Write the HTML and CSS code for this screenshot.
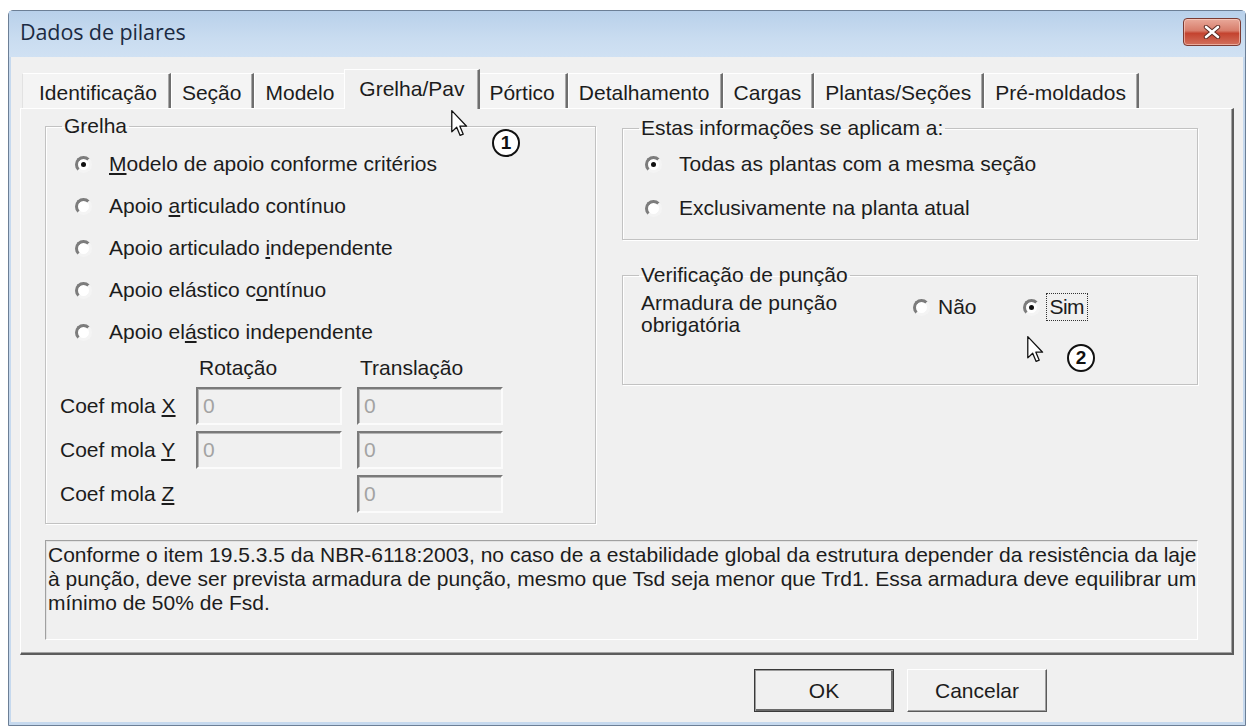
FILE: index.html
```html
<!DOCTYPE html>
<html lang="pt">
<head>
<meta charset="utf-8">
<title>Dados de pilares</title>
<link rel="stylesheet" href="styles.css">
</head>
<body>
<div class="window">
  <div class="titlebar">
    <span class="title">Dados de pilares</span>
    <span class="close">
      <svg viewBox="0 0 20 14" width="20" height="14">
        <path d="M4 2 L16 12 M16 2 L4 12" stroke="#5a2a22" stroke-width="4.4" stroke-linecap="round"/>
        <path d="M4 2 L16 12 M16 2 L4 12" stroke="#fff" stroke-width="2.6" stroke-linecap="round"/>
      </svg>
    </span>
  </div>

  <div class="client">
    <div class="tabs">
      <div class="tab first">Identificação</div>
      <div class="tab">Seção</div>
      <div class="tab">Modelo</div>
      <div class="tab active">Grelha/Pav</div>
      <div class="tab">Pórtico</div>
      <div class="tab">Detalhamento</div>
      <div class="tab">Cargas</div>
      <div class="tab">Plantas/Seções</div>
      <div class="tab">Pré-moldados</div>
    </div>

    <div class="panel">
      <div class="top-row">
        <fieldset class="group grelha">
          <legend>Grelha</legend>
          <div class="radio-list">
            <label class="radio"><span class="rb on"></span><span><u>M</u>odelo de apoio conforme critérios</span></label>
            <label class="radio"><span class="rb"></span><span>Apoio <u>a</u>rticulado contínuo</span></label>
            <label class="radio"><span class="rb"></span><span>Apoio articulado <u>i</u>ndependente</span></label>
            <label class="radio"><span class="rb"></span><span>Apoio elástico c<u>o</u>ntínuo</span></label>
            <label class="radio"><span class="rb"></span><span>Apoio el<u>á</u>stico independente</span></label>
          </div>
          <div class="coef">
            <span></span>
            <span class="colhead">Rotação</span>
            <span class="colhead">Translação</span>

            <span class="coef-label">Coef mola <u>X</u></span>
            <span class="tb">0</span>
            <span class="tb">0</span>

            <span class="coef-label">Coef mola <u>Y</u></span>
            <span class="tb">0</span>
            <span class="tb">0</span>

            <span class="coef-label">Coef mola <u>Z</u></span>
            <span></span>
            <span class="tb">0</span>
          </div>
        </fieldset>

        <div class="right-col">
          <fieldset class="group aplica">
            <legend>Estas informações se aplicam a:</legend>
            <div class="radio-list">
              <label class="radio"><span class="rb on"></span><span>Todas as plantas com a mesma seção</span></label>
              <label class="radio"><span class="rb"></span><span>Exclusivamente na planta atual</span></label>
            </div>
          </fieldset>

          <fieldset class="group puncao">
            <legend>Verificação de punção</legend>
            <div class="puncao-row">
              <span class="puncao-label">Armadura de punção<br>obrigatória</span>
              <div class="yesno">
                <label class="radio"><span class="rb"></span><span>Não</span></label>
                <label class="radio"><span class="rb on"></span><span class="focus">Sim</span></label>
              </div>
            </div>
          </fieldset>
        </div>
      </div>

      <div class="desc">Conforme o item 19.5.3.5 da NBR-6118:2003, no caso de a estabilidade global da estrutura depender da resistência da laje<br>à punção, deve ser prevista armadura de punção, mesmo que Tsd seja menor que Trd1. Essa armadura deve equilibrar um<br>mínimo de 50% de Fsd.</div>
    </div>

    <div class="buttons">
      <span class="btn default">OK</span>
      <span class="btn">Cancelar</span>
    </div>
  </div>

  <!-- pointer and step markers drawn over the dialog -->
  <svg class="cursor c1" viewBox="0 0 13 21" width="17" height="27">
    <path d="M0.5 0.5 L0.5 17 L4.3 13.4 L7 19.8 L9.4 18.8 L6.8 12.6 L12 12.6 Z" fill="#fff" stroke="#111" stroke-width="1" stroke-linejoin="round"/>
  </svg>
  <span class="step s1">1</span>

  <svg class="cursor c2" viewBox="0 0 13 21" width="17" height="27">
    <path d="M0.5 0.5 L0.5 17 L4.3 13.4 L7 19.8 L9.4 18.8 L6.8 12.6 L12 12.6 Z" fill="#fff" stroke="#111" stroke-width="1" stroke-linejoin="round"/>
  </svg>
  <span class="step s2">2</span>
</div>
</body>
</html>
```

FILE: styles.css
```css
* { box-sizing: border-box; }

html, body {
  margin: 0;
  padding: 0;
  background: #ffffff;
}

body {
  font-family: "Liberation Sans", Arial, sans-serif;
  font-size: 21px;
  color: #1c1c1c;
}

/* ---- window frame ---- */
.window {
  position: relative;
  margin: 10px 0 0 8px;
  width: 1238px;
  height: 716px;
  border: 1px solid #6c7f96;
  border-radius: 5px 5px 0 0;
  background: #c6d9ee;
  display: flex;
  flex-direction: column;
  padding: 0 2px 3px 2px;
}

.titlebar {
  height: 46px;
  display: flex;
  align-items: flex-start;
  justify-content: space-between;
  padding: 0 4px 0 11px;
  background: linear-gradient(#b8d0ea, #c9dcf0 60%, #d0e1f3);
  margin: 0 -2px;
}

.title {
  font-family: "Open Sans", "Noto Sans", sans-serif;
  font-size: 21.5px;
  color: #1b2a42;
  margin-top: 6px;
  letter-spacing: -0.1px;
}

.close {
  margin-top: 7px;
  width: 58px;
  height: 28px;
  border: 1px solid #7b3b33;
  border-radius: 4px;
  background: linear-gradient(#e9a99a, #d77d6b 45%, #c4432f 55%, #d2705c);
  box-shadow: inset 0 0 0 1px rgba(255, 220, 210, 0.55);
  display: flex;
  align-items: center;
  justify-content: center;
}

/* ---- client area ---- */
.client {
  flex: 1;
  background: #f0f0f0;
  padding: 12px 9px 0 9px;
  display: flex;
  flex-direction: column;
}

/* ---- tab strip ---- */
.tabs {
  display: flex;
  align-items: flex-end;
  height: 39px;
  padding-left: 2px;
  position: relative;
  z-index: 1;
}

.tab {
  height: 35px;
  line-height: 38px;
  padding: 0 11px 0 10px;
  background: #f4f4f4;
  border-top: 1px solid #ffffff;
  border-left: 1px solid #ffffff;
  border-right: 2px solid #6e6e6e;
  box-shadow: inset -1px 0 #a9a9a9;
  white-space: nowrap;
}

.tab.first {
  border-left: 1px solid #e2e2e2;
  padding-left: 16px;
  padding-right: 12px;
}

.tab.active {
  height: 40px;
  line-height: 37px;
  background: #f0f0f0;
  margin: 0 -2px -1px -3px;
  padding: 0 14px 0 14px;
  position: relative;
  z-index: 2;
}

/* ---- tab page ---- */
.panel {
  height: 547px;
  border-top: 1px solid #ffffff;
  border-left: 1px solid #ffffff;
  border-right: 2px solid #5c5c5c;
  border-bottom: 2px solid #5c5c5c;
  box-shadow: inset -1px -1px #a3a3a3;
  padding: 6px 0 0 24px;
  display: flex;
  flex-direction: column;
}

.top-row {
  display: grid;
  grid-template-columns: 551px 576px;
  column-gap: 26px;
}

/* etched group boxes */
.group {
  margin: 0;
  padding: 0;
  border: 1px solid #c2c2c2;
  box-shadow: inset 1px 1px #ffffff, 1px 1px #ffffff;
  min-width: 0;
}

.group legend {
  padding: 0 2px;
  margin-left: 16px;
  line-height: 22px;
  color: #1c1c1c;
}

.grelha {
  height: 409px;
}

.radio-list {
  display: flex;
  flex-direction: column;
}

.radio {
  display: flex;
  align-items: center;
  gap: 17px;
  height: 42px;
}

/* sunken round option marks */
.rb {
  width: 17px;
  height: 17px;
  flex: none;
  border-radius: 50%;
  background: #ffffff;
  border: 3px solid;
  border-color: #7c7c7c #f4f4f4 #f4f4f4 #7c7c7c;
  position: relative;
}

.rb.on::after {
  content: "";
  position: absolute;
  left: 3px;
  top: 3px;
  width: 5px;
  height: 5px;
  border-radius: 50%;
  background: #111111;
}

.grelha .radio-list {
  padding: 6px 0 0 29px;
}

/* spring coefficient grid */
.coef {
  display: grid;
  grid-template-columns: 121px 146px 146px;
  column-gap: 15px;
  row-gap: 6px;
  padding: 0 0 0 14px;
  margin-top: 4px;
  align-items: center;
}

.colhead {
  line-height: 22px;
  padding-left: 3px;
  margin-bottom: 2px;
}

.coef-label {
  line-height: 22px;
}

.tb {
  height: 38px;
  line-height: 34px;
  padding-left: 5px;
  background: #f0f0f0;
  color: #a3a3a3;
  border: 2px solid;
  border-color: #7a7a7a #fbfbfb #fbfbfb #7a7a7a;
  box-shadow: inset 1px 1px #b4b4b4;
}

/* right column */
.right-col {
  display: flex;
  flex-direction: column;
  gap: 24px;
  padding-top: 2px;
}

.aplica {
  height: 123px;
}

.aplica .radio-list {
  padding: 4px 0 0 22px;
  gap: 2px;
}

.puncao {
  height: 121px;
}

.puncao-row {
  display: flex;
  align-items: flex-start;
  padding: 6px 0 0 18px;
}

.puncao-label {
  width: 272px;
  line-height: 22px;
}

.yesno {
  display: flex;
  gap: 46px;
  margin-top: -6px;
}

.yesno .radio {
  gap: 8px;
}

.focus {
  outline: 1px dotted #333;
  outline-offset: 1px;
  padding: 0 2px;
  letter-spacing: -0.6px;
}

/* description */
.desc {
  margin: 16px 0 0 0;
  width: 1153px;
  height: 100px;
  padding: 2px 0 0 2px;
  line-height: 24px;
  border: 1px solid;
  border-color: #a0a0a0 #ffffff #ffffff #a0a0a0;
  box-shadow: inset 1px 1px #e2e2e2;
  background: #f0f0f0;
  white-space: nowrap;
}

/* ---- dialog buttons ---- */
.buttons {
  display: flex;
  justify-content: flex-end;
  gap: 13px;
  padding: 14px 187px 0 0;
}

.btn {
  width: 140px;
  height: 43px;
  display: flex;
  align-items: center;
  justify-content: center;
  background: #f0f0f0;
  border: 1px solid;
  border-color: #ffffff #5a5a5a #5a5a5a #ffffff;
  box-shadow: inset -1px -1px #a0a0a0;
}

.btn.default {
  border: 1px solid #3a3a3a;
  box-shadow: inset 1px 1px #9c9c9c, inset -2px -2px #6a6a6a;
}

/* ---- overlays ---- */
.cursor {
  position: absolute;
}

.c1 { left: 442px; top: 99px; }
.c2 { left: 1018px; top: 325px; }

.step {
  position: absolute;
  width: 28px;
  height: 28px;
  border: 2px solid #111111;
  border-radius: 50%;
  background: #ffffff;
  font-size: 19px;
  font-weight: bold;
  line-height: 24px;
  text-align: center;
  color: #111111;
}

.s1 { left: 483px; top: 118px; }
.s2 { left: 1058px; top: 333px; }
```
